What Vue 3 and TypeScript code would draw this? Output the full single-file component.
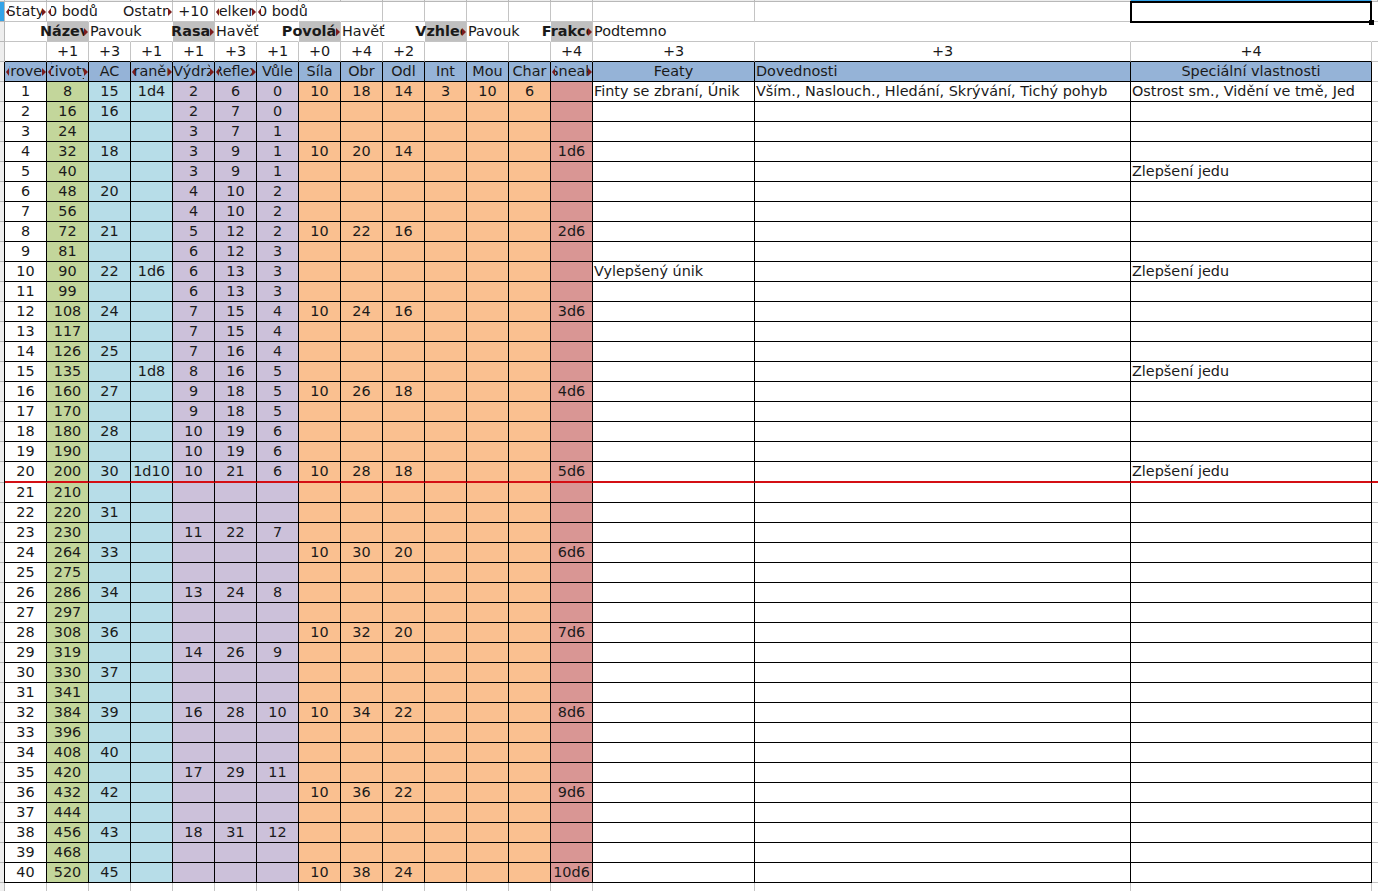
<script setup lang="ts">
interface Cell { t: string; c: string }
interface Row { key: string; c: string; cells: Cell[] }

const cell = (t = '', c = ''): Cell => ({ t, c })
const centred = (list: string[], extra = ''): Cell[] => list.map((t) => cell(t, extra))

const top: Cell[] = [
  cell('Staty', 'clip tl tr'), cell('0 bodů', 'start tl nb'), cell('', 'nb'), cell('Ostatní:', 'over tr'),
  cell('+10'), cell('Celkem', 'clip tl tr'), cell('0 bodů', 'start tl nb'), cell('', 'nb'),
  ...centred(Array(6).fill('')), cell(), cell(), cell(),
]
const names: Cell[] = [
  cell('', 'nb'), cell('Název:', 'label over tr'), cell('Pavouk', 'start nb'), cell('', 'nb'),
  cell('Rasa:', 'label over tr'), cell('Havěť', 'start nb'), cell('', 'nb'), cell('Povolání:', 'label over tr'),
  cell('Havěť', 'start nb'), cell('', 'nb'), cell('Vzhled:', 'label over tr'), cell('Pavouk', 'start nb'),
  cell('', 'nb'), cell('Frakce:', 'label over tr'), cell('Podtemno', 'start nb'), cell('', 'nb'), cell('', 'nb'),
]
const bonus: Cell[] = centred(['', '+1', '+3', '+1', '+1', '+3', '+1', '+0', '+4', '+2', '', '', '', '+4', '+3', '+3', '+4'], 'lastrow')
const heads: Cell[] = [
  cell('Úroveň', 'clip tl tr'), cell('Životy', 'clip tl tr'), cell('AC'), cell('Zranění', 'clip tl tr'),
  cell('Výdrž', 'clipr tr'), cell('Reflex', 'clip tl tr'), cell('Vůle'), cell('Síla'), cell('Obr'), cell('Odl'),
  cell('Int'), cell('Mou'), cell('Char'), cell('Sneak', 'clip tl tr'), cell('Featy'),
  cell('Dovednosti', 'start'), cell('Speciální vlastnosti'),
].map((x) => ({ ...x, c: `${x.c} head` }))

const table = `8,15,1d4,2,6,0,10,18,14,3,10,6,
16,16,,2,7,0
24,,,3,7,1
32,18,,3,9,1,10,20,14,,,,1d6
40,,,3,9,1
48,20,,4,10,2
56,,,4,10,2
72,21,,5,12,2,10,22,16,,,,2d6
81,,,6,12,3
90,22,1d6,6,13,3
99,,,6,13,3
108,24,,7,15,4,10,24,16,,,,3d6
117,,,7,15,4
126,25,,7,16,4
135,,1d8,8,16,5
160,27,,9,18,5,10,26,18,,,,4d6
170,,,9,18,5
180,28,,10,19,6
190,,,10,19,6
200,30,1d10,10,21,6,10,28,18,,,,5d6
210
220,31
230,,,11,22,7
264,33,,,,,10,30,20,,,,6d6
275
286,34,,13,24,8
297
308,36,,,,,10,32,20,,,,7d6
319,,,14,26,9
330,37
341
384,39,,16,28,10,10,34,22,,,,8d6
396
408,40
420,,,17,29,11
432,42,,,,,10,36,22,,,,9d6
444
456,43,,18,31,12
468
520,45,,,,,10,38,24,,,,10d6`.split('\n')

const tints = ['green', 'blue', 'blue', 'purple', 'purple', 'purple', 'orange', 'orange', 'orange', 'orange', 'orange', 'orange', 'red']
const feats: Record<number, string> = { 1: 'Finty se zbraní, Únik', 10: 'Vylepšený únik' }
const skills: Record<number, string> = { 1: 'Vším., Naslouch., Hledání, Skrývání, Tichý pohyb' }
const specials: Record<number, string> = {
  1: 'Ostrost sm., Vidění ve tmě, Jed', 5: 'Zlepšení jedu', 10: 'Zlepšení jedu', 15: 'Zlepšení jedu', 20: 'Zlepšení jedu',
}

const data: Row[] = table.map((line, i) => {
  const level = i + 1
  const values = line.split(',')
  return {
    key: `l${level}`,
    c: level === 20 ? 'data redline' : 'data',
    cells: [
      cell(String(level), 'black'),
      ...tints.map((tint, n) => cell(values[n] ?? '', `black ${tint}`)),
      cell(feats[level] ?? '', 'black start'),
      cell(skills[level] ?? '', 'black start'),
      cell(specials[level] ?? '', 'black start'),
    ],
  }
})

const rows: Row[] = [
  { key: 'top', c: 'current', cells: top.slice(0, 17) },
  { key: 'names', c: '', cells: names },
  { key: 'bonus', c: 'beforehead', cells: bonus },
  { key: 'heads', c: 'data', cells: heads },
  ...data,
]
const columns = Array.from({ length: 17 }, (_, i) => i)
</script>

<template>
  <div class="sheet">
    <div class="strip row">
      <div class="gutter"></div>
      <div v-for="n in columns" :key="n" class="mark" :class="{ active: n === 16 }"></div>
      <div class="mark"></div>
    </div>
    <div v-for="row in rows" :key="row.key" class="row" :class="row.c">
      <div class="gutter"></div>
      <div v-for="(item, i) in row.cells" :key="i" class="cell" :class="item.c">
        <span v-if="item.t" class="box"><span class="txt">{{ item.t }}</span></span>
      </div>
      <div class="rest"></div>
    </div>
    <div class="row tail">
      <div class="gutter"></div>
      <div v-for="n in columns" :key="n" class="cell"></div>
      <div class="rest"></div>
    </div>
    <div class="selection"><i class="handle"></i></div>
  </div>
</template>

<style>
html, body { margin: 0; background: #fff; overflow: hidden; }
</style>

<style scoped>
.sheet {
  position: relative;
  width: 1378px;
  height: 891px;
  overflow: hidden;
  background: #fff;
  color: #1a1a1a;
  font: 14.4px/1 "DejaVu Sans", sans-serif;
}
.row {
  display: grid;
  grid-template-columns: 5px repeat(14, 42px) 162px 376px 241px 1fr;
  height: 20px;
}
.strip { height: 2px; background: #eee; }
.gutter {
  background: #eee;
  border-right: 1px solid #b8b8b8;
  border-bottom: 1px solid #b8b8b8;
}
.current .gutter { background: #33a3e8; }
.mark { background: #eee; border-right: 1px solid #b8b8b8; border-bottom: 1px solid #b8b8b8; }
.mark.active { background: #33a3e8; border-bottom-color: #33a3e8; }
.rest { border-bottom: 1px solid #c4c4c4; }
.cell {
  position: relative;
  display: flex;
  align-items: center;
  min-width: 0;
  border-right: 1px solid #c4c4c4;
  border-bottom: 1px solid #c4c4c4;
  white-space: nowrap;
}
.box {
  display: flex;
  justify-content: center;
  width: 100%;
  min-width: 0;
}
.txt { flex: none; }
.nb { border-right-color: transparent; }
.start { padding-left: 1px; }
.start .box { justify-content: flex-start; }
.start.tl .box { clip-path: inset(-2px -80px -2px 3px); }
.clip .box { clip-path: inset(-2px 4px -2px 4px); }
.clipr .box { clip-path: inset(-2px 4px -2px 0); }
.over .box { clip-path: inset(-2px 4px -2px -40px); }
.label { background: #c0c0c0; font-weight: 700; }
.lastrow { border-bottom-color: #000; }
.black { border-right-color: #000; border-bottom-color: #000; }
.head { background: #95b3d7; border-right-color: #000; border-bottom-color: #000; }
.green { background: #c3d69b; }
.blue { background: #b7dde8; }
.purple { background: #ccc1da; }
.orange { background: #fac090; }
.red { background: #d99694; }
.data .gutter + .cell { box-shadow: -1px 0 0 #000; }
.redline { height: 21px; }
.redline .cell, .redline .rest { border-bottom: 2px solid #d40f14; }
.tail { height: 9px; }
.tl::before, .tr::after {
  content: "";
  position: absolute;
  top: 50%;
  margin-top: -4px;
  border-top: 4px solid transparent;
  border-bottom: 4px solid transparent;
}
.tl::before { left: 1px; border-right: 3px solid #7d1c1c; }
.tr::after { right: 0; border-left: 4px solid #7d1c1c; }
.selection {
  position: absolute;
  left: 1130px;
  top: 1px;
  width: 238px;
  height: 18px;
  border: 2px solid #000;
}
.handle {
  position: absolute;
  right: -4px;
  bottom: -4px;
  width: 5px;
  height: 5px;
  background: #000;
}
</style>
